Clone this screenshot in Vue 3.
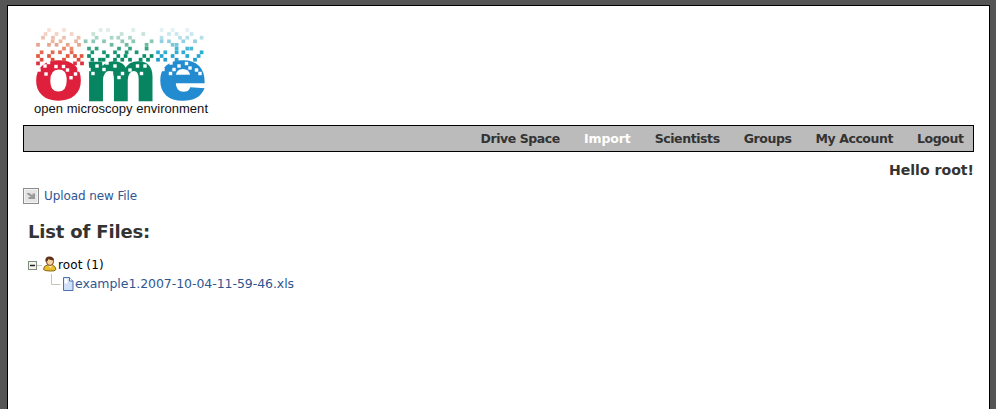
<script setup>
const navItems = ['Drive Space', 'Import', 'Scientists', 'Groups', 'My Account', 'Logout']

// Scattered squares above each letter: [y, [x centres], colour]
const dots = [
  [30, [49, 64], '#f8dfd6'],
  [34, [45.6, 56.6, 71.6], '#f3d2c6'],
  [37.7, [43, 53, 64, 78.6], '#ecc0ae'],
  [41.3, [52.6, 60.6, 76], '#ebb59e'],
  [44.8, [38, 49, 56.6, 67.7, 79], '#e6a58e'],
  [48.6, [64, 71.5], '#e88a6b'],
  [52.3, [41.6, 52.6, 60, 71.6], '#e36b50'],
  [56, [38, 49, 67.7, 75, 81.6], '#e0583f'],
  [59.7, [41.6, 52.6, 64, 78.6], '#df4b3b'],
  [63.4, [38, 75, 82], '#dc3040'],
  [30, [100.6, 108, 133.3], '#dceee8'],
  [34, [93.3, 121.6, 143.3], '#c5e3d8'],
  [37.7, [96.6, 111.6, 118.3, 130], '#a9d6c6'],
  [41.3, [85.6, 93.3, 104, 122.3, 133.3, 151.6], '#8bc8b3'],
  [44.8, [111.6, 126.6, 146.6], '#6abb9f'],
  [48.6, [89, 96.6, 119, 130, 146.6], '#35a481'],
  [52.3, [92.3, 104, 115, 126.6, 136.6], '#169673'],
  [56, [89, 107.6, 118.3, 125.6, 144.3, 151.6], '#0c8f6b'],
  [59.7, [92.3, 100, 103.6, 115, 122.3, 130, 140.6, 148], '#088a65'],
  [30, [161.6, 172.6, 187.3], '#e0f1f5'],
  [34, [169, 176.6, 191.6], '#c8e7ef'],
  [37.7, [161.6, 180, 187.3, 201.6], '#b4dfe9'],
  [41.3, [161.6, 169, 183.3, 195], '#90d0e0'],
  [44.8, [172.6, 176.6], '#78c8dc'],
  [48.6, [176.6, 187.3, 191.3], '#4bb7d5'],
  [52.3, [158, 165.3, 176.6, 183.3, 201.6], '#2caed4'],
  [56, [161.6, 172.6, 187.3, 198.6], '#25a6d2'],
  [59.7, [158, 165.3, 176.6, 195], '#219ccd']
]

// Squares knocked out of the letters
const holes = [
  [48.5, 62.5], [45, 66], [56, 66.5], [63.5, 66.5], [39, 70], [46, 74], [71, 77.7], [75.5, 74], [79, 70], [67.5, 70],
  [89, 69.5], [93, 73.5], [97, 66], [104, 69.5], [111.5, 73], [107, 63], [119, 77.5], [122.5, 73.5],
  [115, 66], [130, 70], [134, 77.5], [137.5, 66], [141.5, 73.5], [145, 66], [126, 63],
  [163, 69.5], [170.5, 73.5], [174, 69.5], [171, 63], [179, 66], [186.5, 63.5], [190, 68], [196.5, 70], [200, 73.5]
]
</script>

<template>
  <div class="page">
    <svg class="logo" width="190" height="98" viewBox="23 22 190 98" role="img">
      <g class="letters">
        <text class="o" x="34.500" y="99" textLength="48" lengthAdjust="spacingAndGlyphs">o</text>
        <text class="m" x="85" y="99.500" textLength="71" lengthAdjust="spacingAndGlyphs">m</text>
        <text class="e" x="158.500" y="99" textLength="47.500" lengthAdjust="spacingAndGlyphs">e</text>
      </g>
      <template v-for="(row, r) in dots" :key="r">
        <rect v-for="x in row[1]" :key="x" :x="x - 1.85" :y="row[0] - 1.85" width="3.7" height="3.7" :fill="row[2]" />
      </template>
      <rect v-for="(h, i) in holes" :key="'h' + i" :x="h[0] - 1.7" :y="h[1] - 1.7" width="3.4" height="3.4" fill="#fff" />
      <text class="tagline" x="34" y="113" textLength="174">open microscopy environment</text>
    </svg>

    <nav class="nav">
      <a v-for="item in navItems" :key="item" :class="{ active: item === 'Import' }">{{ item }}</a>
    </nav>
    <div class="hello">Hello root!</div>

    <a class="upload">
      <svg width="16" height="16" viewBox="0 0 16 16">
        <rect x=".5" y=".5" width="15" height="15" fill="#f3f3f3" stroke="#8c8c8c" />
        <rect x="2" y="2" width="12" height="12" fill="#e4e4e4" />
        <path d="M4 5h2.500l3 2.500V5.500H12V11H5.500V9H8L4 6z" fill="#999" />
      </svg>
      <span>Upload new File</span>
    </a>

    <h2>List of Files:</h2>

    <div class="tree">
      <div class="row">
        <svg width="30" height="20" viewBox="28 255 30 20">
          <path d="M37 266.500h5" stroke="#c6c6b4" />
          <rect x="28.500" y="262.500" width="8" height="8" fill="#f5f5ef" stroke="#7d8b7d" />
          <path d="M30 266.500h5" stroke="#222" stroke-width="1.500" />
          <path d="M43.500 270.500q0-4 4-4.500h5q3 1 3.500 4.500-1 2-6 1.500-5 0-6.500-1.500z" fill="#e8bf2a" stroke="#8d6817" />
          <path d="M48 266l2.500 3 2-3z" fill="#fff0d2" />
          <ellipse cx="50" cy="262.500" rx="3.500" ry="4" fill="#f8d39a" stroke="#704025" />
          <path d="M45.500 263q-1-5.500 4-5.500 4 0 4.500 3.500-4 .5-5.500-1-.5 2.500-3 3z" fill="#603018" />
        </svg>
        <span class="owner">root (1)</span>
      </div>
      <div class="row">
        <svg width="47" height="19" viewBox="28 274 47 19">
          <path d="M51.500 274v10.500h9" fill="none" stroke="#c6c6b4" />
          <path d="M63.500 277.500h6l3.500 3.500v9.500h-9.500z" fill="#cfe0f8" stroke="#4d73ae" />
          <path d="M69.500 277.500v3.500h3.500" fill="#fff" stroke="#4d73ae" />
          <path d="M64.500 278.500h3v5h-3z" fill="#fff" />
        </svg>
        <a class="file">example1.2007-10-04-11-59-46.xls</a>
      </div>
    </div>
  </div>
</template>

<style>
body { background: #555; }
</style>

<style scoped>
.page {
  box-sizing: border-box;
  height: 404px;
  margin: 5px 6px 0 7px;
  padding: 16px 15px 0;
  border: 1px solid #000;
  border-bottom: 0;
  background: #fff;
  font-family: Verdana, "DejaVu Sans", sans-serif;
  font-size: 13px;
  color: #333;
  overflow: hidden;
}
.logo { display: block; }
.letters {
  font-family: "Liberation Sans", Arial, sans-serif;
  font-weight: bold;
  font-size: 71px;
  stroke-width: 2.6;
}
.o { fill: #df203c; stroke: #df203c; }
.m { fill: #078561; stroke: #078561; }
.e { fill: #238bd0; stroke: #238bd0; }
.tagline { font: 13px "Liberation Sans", Arial, sans-serif; fill: #111; }
.nav {
  box-sizing: border-box;
  display: flex;
  justify-content: flex-end;
  align-items: center;
  gap: 24px;
  height: 27px;
  margin-top: 5px;
  padding-right: 9.500px;
  border: 1px solid #000;
  background: #bbb;
  font-size: 12.500px;
  font-weight: bold;
  letter-spacing: -.42px;
}
.active { color: #fff; letter-spacing: -.1px; }
.hello {
  height: 18px;
  margin-top: 9px;
  font-size: 14.100px;
  line-height: 18px;
  font-weight: bold;
  text-align: right;
}
.upload {
  display: flex;
  align-items: center;
  gap: 5px;
  height: 16px;
  margin-top: 9px;
  color: #2f5691;
  font-size: 12px;
  letter-spacing: -.1px;
}
h2 {
  margin: 16px 0 0 5px;
  font-size: 18px;
  line-height: 24px;
  letter-spacing: -.17px;
}
.tree { margin: 11px 0 0 5px; }
.row { display: flex; align-items: center; height: 20px; line-height: 20px; }
.row + .row { height: 19px; line-height: 19px; }
.row:first-child svg, .row + .row svg { margin-top: -2px; }
.owner { color: #000; font-size: 12px; letter-spacing: .1px; }
.file { height: 19px; line-height: 18px; color: #2f5691; font-size: 12.500px; letter-spacing: -.06px; }
</style>
